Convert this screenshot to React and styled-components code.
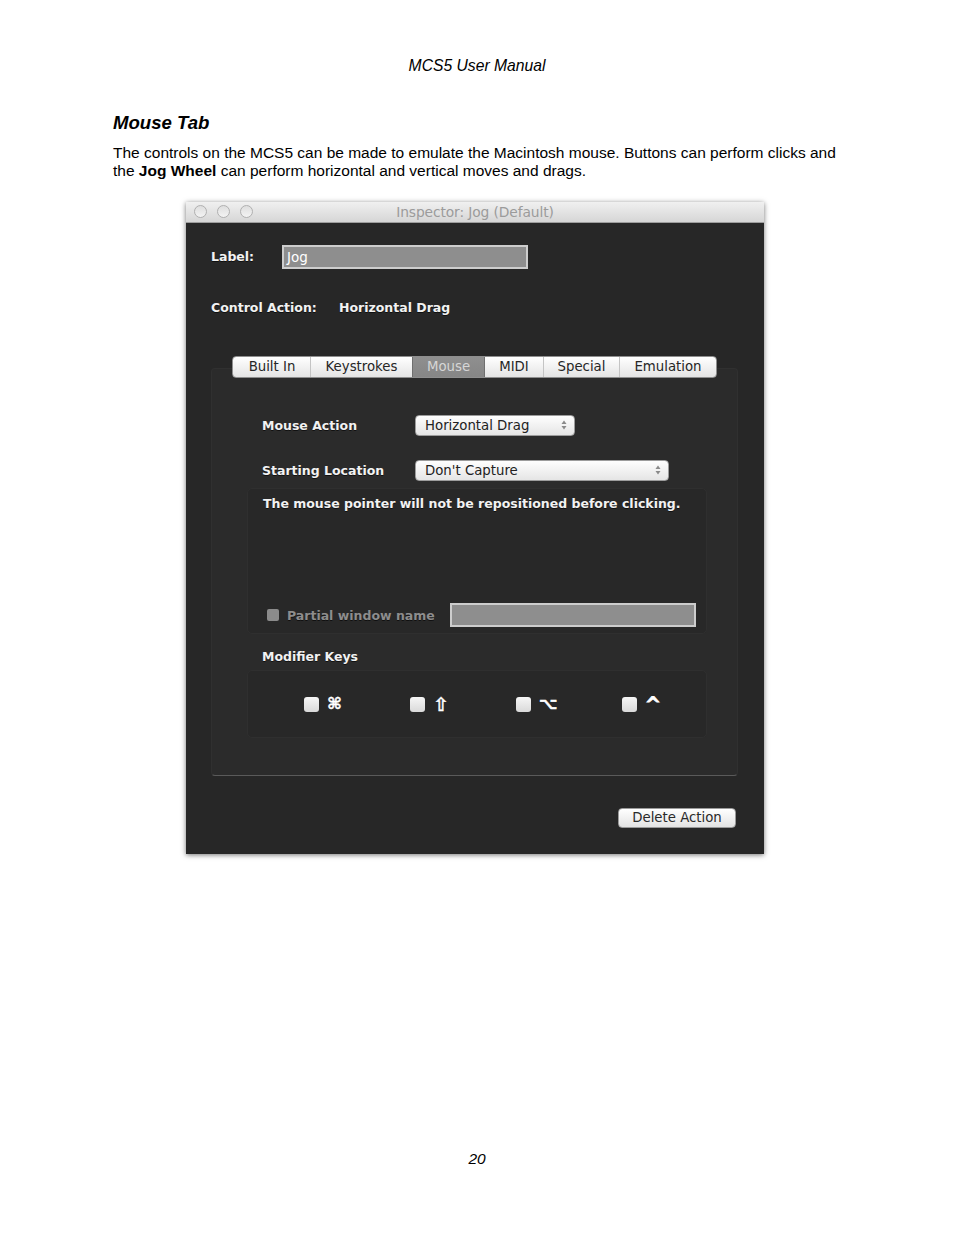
import React from "react";
import styled, { createGlobalStyle } from "styled-components";

const Global = createGlobalStyle`
  html, body { margin: 0; padding: 0; background: #ffffff; }
  body { font-family: "Liberation Sans", Arial, sans-serif; color: #000; }
`;

const Page = styled.div`
  width: 954px;
  min-height: 1235px;
  box-sizing: border-box;
  padding-top: 57px;
  display: flex;
  flex-direction: column;
`;

const RunningHead = styled.div`
  text-align: center;
  font-style: italic;
  font-size: 15.7px;
  line-height: 18px;
`;

const Heading = styled.h2`
  margin: 37px 0 0 113px;
  font-size: 18.6px;
  line-height: 22px;
  font-weight: bold;
  font-style: italic;
`;

const Para = styled.p`
  margin: 10px 0 0 113px;
  width: 740px;
  font-size: 15.5px;
  line-height: 18.4px;
`;

const Line = styled.span`
  display: block;
  white-space: nowrap;
`;

const Strong = styled.strong`
  font-weight: bold;
`;

const Win = styled.div`
  margin: 21px 0 0 186px;
  width: 578px;
  box-shadow: 0 1px 5px rgba(0, 0, 0, 0.55);
  display: flex;
  flex-direction: column;
  font-family: "DejaVu Sans", Verdana, sans-serif;
`;

const TitleBar = styled.div`
  height: 21px;
  box-sizing: border-box;
  border-bottom: 1px solid #9e9e9e;
  background: linear-gradient(#f0f0f0, #d6d6d6);
  display: flex;
  align-items: center;
  padding-left: 8px;
`;

const Lights = styled.div`
  display: flex;
  gap: 10px;
`;

const Light = styled.span`
  width: 13px;
  height: 13px;
  box-sizing: border-box;
  border-radius: 50%;
  border: 1px solid #b0b0b0;
  background: linear-gradient(#dedede, #f3f3f3);
`;

const Title = styled.div`
  flex: 1;
  text-align: center;
  margin-right: 67px;
  color: #9b9b9b;
  font-size: 13.8px;
  letter-spacing: -0.1px;
`;

const Body = styled.div`
  background: #272727;
  padding: 22px 26px 26px 25px;
  display: flex;
  flex-direction: column;
`;

const FieldRow = styled.div`
  height: 24px;
  display: flex;
  align-items: center;
  margin-top: ${(p) => p.$mt || 0}px;
`;

const BoldLabel = styled.span`
  width: ${(p) => (p.$w ? p.$w + "px" : "auto")};
  flex: none;
  color: ${(p) => (p.$dim ? "#8d8d8d" : "#f2f2f2")};
  font-weight: bold;
  font-size: 12.5px;
  text-shadow: 0 1px 0 rgba(0, 0, 0, 0.6);
  white-space: nowrap;
`;

const TextField = styled.div`
  width: ${(p) => p.$w}px;
  height: 24px;
  box-sizing: border-box;
  border: 2px solid #cdcdcd;
  background: #8e8e8e;
  color: #ffffff;
  font-size: 13.5px;
  line-height: 20px;
  padding-left: 3px;
`;

const Tabs = styled.div`
  align-self: center;
  margin-top: 36px;
  height: 22px;
  box-sizing: border-box;
  display: flex;
  border: 1px solid #8e8e8e;
  border-radius: 4px;
  overflow: hidden;
  background: linear-gradient(#ffffff, #e4e4e4);
  position: relative;
  z-index: 1;
`;

const Tab = styled.div`
  width: ${(p) => p.$w}px;
  box-sizing: border-box;
  display: flex;
  align-items: center;
  justify-content: center;
  font-size: 13.3px;
  color: ${(p) => (p.$on ? "#d6d6d6" : "#262626")};
  background: ${(p) => (p.$on ? "linear-gradient(#8f8f8f, #868686)" : "transparent")};
  border-left: 1px solid
    ${(p) => (p.$first ? "transparent" : p.$on || p.$afterOn ? "#6f6f6f" : "#c4c4c4")};
`;

const Panel = styled.div`
  margin-top: -10px;
  height: 408px;
  box-sizing: border-box;
  border: 1px solid #303030;
  border-bottom: 1px solid #5a5a5a;
  border-radius: 4px;
  background: #2b2b2b;
  padding: 46px 30px 37px 35px;
  display: flex;
  flex-direction: column;
`;

const PopRow = styled.div`
  height: 21px;
  display: flex;
  align-items: center;
  padding-left: 15px;
  margin-top: ${(p) => p.$mt || 0}px;
`;

const Popup = styled.div`
  width: ${(p) => p.$w}px;
  height: 21px;
  box-sizing: border-box;
  border: 1px solid #9c9c9c;
  border-radius: 4px;
  background: linear-gradient(#fefefe, #e5e5e5);
  display: flex;
  align-items: center;
  padding: 0 7px 0 9px;
  font-size: 13.3px;
  color: #222;
`;

const PopText = styled.span`
  flex: 1;
`;

const Arrows = () => (
  <svg width="6" height="10" viewBox="0 0 6 10">
    <path d="M3 0.5 L5.5 4 H0.5 Z" fill="#8a8a8a" />
    <path d="M3 9.5 L5.5 6 H0.5 Z" fill="#8a8a8a" />
  </svg>
);

const GroupBox = styled.div`
  margin-top: ${(p) => p.$mt || 0}px;
  height: ${(p) => p.$h}px;
  box-sizing: border-box;
  border: 1px solid #2f2f2f;
  border-radius: 5px;
  background: #282828;
  display: flex;
`;

const MessageBox = styled(GroupBox)`
  flex-direction: column;
  justify-content: space-between;
  padding: 7px 10px 6px 15px;
`;

const Message = styled.div`
  color: #f2f2f2;
  font-weight: bold;
  font-size: 12.5px;
  line-height: 16px;
  text-shadow: 0 1px 0 rgba(0, 0, 0, 0.6);
`;

const PartialRow = styled.div`
  display: flex;
  align-items: center;
  padding-left: 4px;
`;

const DimBox = styled.span`
  width: 12px;
  height: 12px;
  border-radius: 2px;
  background: #8b8b8b;
  margin-right: 8px;
  flex: none;
`;

const Spacer = styled.span`
  flex: 1;
`;

const SectionLabel = styled.div`
  margin-top: 14px;
  padding-left: 15px;
  height: 16px;
  line-height: 16px;
`;

const ModBox = styled(GroupBox)`
  align-items: center;
  padding-left: 56px;
`;

const ModItem = styled.div`
  width: 106px;
  flex: none;
  display: flex;
  align-items: center;
  gap: 8px;
`;

const Check = styled.span`
  width: 15px;
  height: 15px;
  border-radius: 3px;
  background: linear-gradient(#f6f6f6, #d9d9d9);
  flex: none;
`;

const Sym = styled.span`
  color: #ffffff;
  font-weight: bold;
  font-size: ${(p) => p.$size || 14}px;
  line-height: 16px;
  height: 16px;
  display: inline-flex;
  align-items: ${(p) => (p.$top ? "flex-start" : "center")};
  font-family: "DejaVu Sans", sans-serif;
  -webkit-text-stroke: ${(p) => p.$stroke || 0}px #ffffff;
`;

const Footer = styled.div`
  margin-top: 32px;
  display: flex;
  justify-content: flex-end;
  padding-right: 2px;
`;

const Button = styled.div`
  width: 118px;
  height: 20px;
  box-sizing: border-box;
  border: 1px solid #9a9a9a;
  border-radius: 4px;
  background: linear-gradient(#ffffff, #e3e3e3);
  color: #2a2a2a;
  font-size: 13.3px;
  display: flex;
  align-items: center;
  justify-content: center;
`;

const PageNum = styled.div`
  margin-top: 296px;
  text-align: center;
  font-style: italic;
  font-size: 15.5px;
  line-height: 18px;
`;

const tabs = [
  ["Built In", 77],
  ["Keystrokes", 102],
  ["Mouse", 72],
  ["MIDI", 59],
  ["Special", 76],
  ["Emulation", 97],
];

export default function App() {
  return (
    <Page>
      <Global />
      <RunningHead>MCS5 User Manual</RunningHead>
      <Heading>Mouse Tab</Heading>
      <Para>
        <Line>
          The controls on the MCS5 can be made to emulate the Macintosh mouse. Buttons can perform clicks and
        </Line>
        <Line>
          the <Strong>Jog Wheel</Strong> can perform horizontal and vertical moves and drags.
        </Line>
      </Para>

      <Win>
        <TitleBar>
          <Lights>
            <Light />
            <Light />
            <Light />
          </Lights>
          <Title>Inspector: Jog (Default)</Title>
        </TitleBar>
        <Body>
          <FieldRow>
            <BoldLabel $w={71}>Label:</BoldLabel>
            <TextField $w={246}>Jog</TextField>
          </FieldRow>
          <FieldRow $mt={27}>
            <BoldLabel $w={128}>Control Action:</BoldLabel>
            <BoldLabel>Horizontal Drag</BoldLabel>
          </FieldRow>

          <Tabs>
            {tabs.map(([t, w], i) => (
              <Tab
                key={t}
                $w={w}
                $first={i === 0}
                $on={t === "Mouse"}
                $afterOn={i > 0 && tabs[i - 1][0] === "Mouse"}
              >
                {t}
              </Tab>
            ))}
          </Tabs>
          <Panel>
            <PopRow>
              <BoldLabel $w={153}>Mouse Action</BoldLabel>
              <Popup $w={160}>
                <PopText>Horizontal Drag</PopText>
                <Arrows />
              </Popup>
            </PopRow>
            <PopRow $mt={24}>
              <BoldLabel $w={153}>Starting Location</BoldLabel>
              <Popup $w={254}>
                <PopText>Don't Capture</PopText>
                <Arrows />
              </Popup>
            </PopRow>
            <MessageBox $mt={7} $h={148}>
              <Message>The mouse pointer will not be repositioned before clicking.</Message>
              <PartialRow>
                <DimBox />
                <BoldLabel $dim>Partial window name</BoldLabel>
                <Spacer />
                <TextField $w={246} />
              </PartialRow>
            </MessageBox>
            <SectionLabel>
              <BoldLabel>Modifier Keys</BoldLabel>
            </SectionLabel>
            <ModBox $mt={6} $h={68}>
              <ModItem>
                <Check />
                <Sym $size={16} $stroke={0.4}>⌘</Sym>
              </ModItem>
              <ModItem>
                <Check />
                <Sym $size={19} $stroke={0.35}>⇧</Sym>
              </ModItem>
              <ModItem>
                <Check />
                <Sym $size={16} $stroke={0.5}>⌥</Sym>
              </ModItem>
              <ModItem>
                <Check />
                <Sym $size={19} $stroke={0.8} $top>^</Sym>
              </ModItem>
            </ModBox>
          </Panel>
          <Footer>
            <Button>Delete Action</Button>
          </Footer>
        </Body>
      </Win>

      <PageNum>20</PageNum>
    </Page>
  );
}
